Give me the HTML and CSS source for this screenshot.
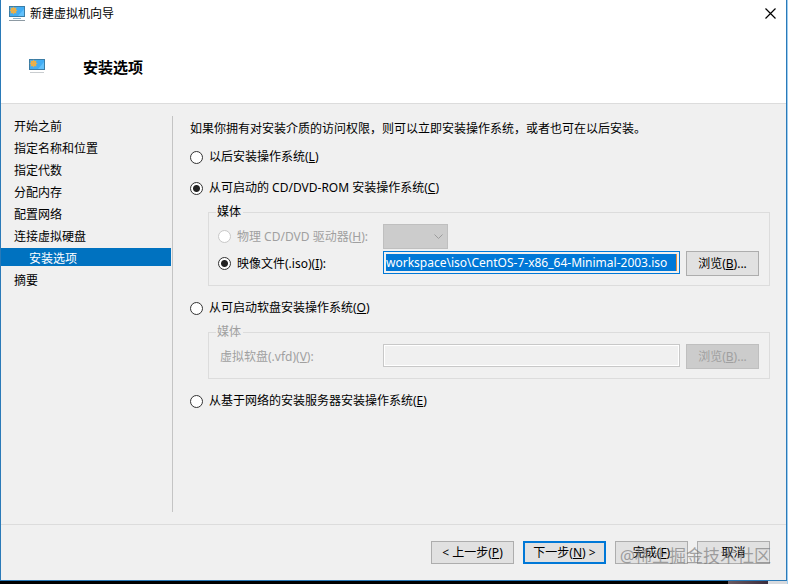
FILE: index.html
```html
<!DOCTYPE html>
<html lang="zh-CN">
<head>
  <meta charset="utf-8">
  <title>新建虚拟机向导</title>
  <link rel="stylesheet" href="styles.css">
</head>
<body>
  <div class="dialog">
    <!-- Title bar -->
    <header class="titlebar">
      <svg class="app-icon" viewBox="0 0 16 16">
        <rect x="0" y="0" width="16" height="11" fill="#3b7da6"/>
        <rect x="1" y="1" width="14" height="9" fill="#42adf4"/>
        <path d="M9 10L15 3V10Z" fill="#63c1fb"/>
        <path d="M4.500 0.500L5.500 2L7.500 1.500L7 3.500L8.500 4.500L7 5.500L7.500 7.500L5.500 7L4.500 8.500L3.500 7L1.500 7.500L2 5.500L0.500 4.500L2 3.500L1.500 1.500L3.500 2Z" fill="#e9b04a"/>
        <rect x="4" y="12" width="8" height="1" fill="#8ab4cc"/>
        <rect x="0" y="14" width="16" height="1" fill="#8d9aa3"/>
      </svg>
      <span class="title">新建虚拟机向导</span>
      <button class="close" aria-label="关闭">
        <svg viewBox="0 0 11 11"><path d="M0.500 0.500L10.500 10.500M10.500 0.500L0.500 10.500" stroke="#000" stroke-width="1.200"/></svg>
      </button>
    </header>

    <!-- Page heading -->
    <div class="heading">
      <svg class="page-icon" viewBox="0 0 16 16">
        <rect x="0" y="0" width="16" height="11" fill="#3b7da6"/>
        <rect x="1" y="1" width="14" height="9" fill="#42adf4"/>
        <path d="M9 10L15 3V10Z" fill="#63c1fb"/>
        <path d="M4.500 0.500L5.500 2L7.500 1.500L7 3.500L8.500 4.500L7 5.500L7.500 7.500L5.500 7L4.500 8.500L3.500 7L1.500 7.500L2 5.500L0.500 4.500L2 3.500L1.500 1.500L3.500 2Z" fill="#e9b04a"/>
        <rect x="1" y="13" width="14" height="1" fill="#c9cdd0"/>
      </svg>
      <h1>安装选项</h1>
    </div>

    <div class="body">
      <nav class="steps">
        <a href="#">开始之前</a>
        <a href="#">指定名称和位置</a>
        <a href="#">指定代数</a>
        <a href="#">分配内存</a>
        <a href="#">配置网络</a>
        <a href="#">连接虚拟硬盘</a>
        <a href="#" class="current">安装选项</a>
        <a href="#">摘要</a>
      </nav>

      <form class="options" id="installForm">
        <p>如果你拥有对安装介质的访问权限，则可以立即安装操作系统，或者也可在以后安装。</p>

        <label class="option"><input type="radio" name="install"><span>以后安装操作系统(<u>L</u>)</span></label>

        <label class="option"><input type="radio" name="install" checked><span>从可启动的 CD/DVD-ROM 安装操作系统(<u>C</u>)</span></label>
        <fieldset>
          <legend>媒体</legend>
          <div class="media">
            <label class="option disabled"><input type="radio" name="media" disabled><span>物理 CD/DVD 驱动器(<u>H</u>):</span></label>
            <div class="drive">
              <select aria-label="物理驱动器" disabled></select>
              <svg viewBox="0 0 9 5"><path d="M0.500 0.500L4.500 4.500L8.500 0.500" fill="none" stroke="#9c9c9c"/></svg>
            </div>
            <label class="option"><input type="radio" name="media" checked><span>映像文件(.iso)(<u>I</u>):</span></label>
            <input type="text" class="path selected" aria-label="映像文件" value="workspace\iso\CentOS-7-x86_64-Minimal-2003.iso">
            <button type="button">浏览(<u>B</u>)...</button>
          </div>
        </fieldset>

        <label class="option"><input type="radio" name="install"><span>从可启动软盘安装操作系统(<u>O</u>)</span></label>
        <fieldset disabled>
          <legend>媒体</legend>
          <div class="media">
            <label class="floppy" for="floppy">虚拟软盘(.vfd)(<u>V</u>):</label>
            <input type="text" class="path" id="floppy">
            <button type="button">浏览(<u>B</u>)...</button>
          </div>
        </fieldset>

        <label class="option"><input type="radio" name="install"><span>从基于网络的安装服务器安装操作系统(<u>E</u>)</span></label>
      </form>
    </div>

    <footer>
      <button class="wide">&lt; 上一步(<u>P</u>)</button>
      <button class="wide default">下一步(<u>N</u>) &gt;</button>
      <button>完成(<u>F</u>)</button>
      <button>取消</button>
      <span class="watermark">@稀土掘金技术社区</span>
    </footer>
  </div>
  <div class="desktop"></div>
</body>
</html>
```
FILE: styles.css
```css
* {
  box-sizing: border-box;
}

body {
  margin: 0;
  padding-right: 1px;
  min-height: 100vh;
  display: flex;
  flex-direction: column;
  background: #9fcdf0;
  color: #000;
  font: 12px/18px "Noto Sans", "Noto Sans CJK SC", sans-serif;
}

button, input, select {
  font: inherit;
  color: inherit;
}

.dialog {
  flex: 1;
  display: flex;
  flex-direction: column;
  background: #f0f0f0;
  border: 1px solid #2a7ab8;
  border-top: 0;
}

.desktop {
  height: 3px;
  background: linear-gradient(to right, #000 728px, #6b5a60 728px, #3a2c3c 768px, #d8dade 768px);
}

/* Title bar and heading */
.titlebar {
  display: flex;
  align-items: center;
  height: 27px;
  padding: 0 10px 0 8px;
  background: #fff;
}

.app-icon {
  width: 16px;
  height: 16px;
}

.title {
  flex: 1;
  margin-left: 5px;
}

.close {
  width: 11px;
  height: 11px;
  padding: 0;
  border: 0;
  background: none;
}

.close svg {
  display: block;
}

.heading {
  display: flex;
  align-items: center;
  height: 77px;
  padding: 4px 28px 0;
  background: #fff;
  border-bottom: 1px solid #dcdcdc;
}

.page-icon {
  width: 16px;
  height: 16px;
}

h1 {
  margin: 0 0 0 38px;
  font-size: 15px;
  line-height: 20px;
  font-weight: bold;
}

/* Step list and options */
.body {
  flex: 1;
  display: flex;
  padding: 12px 16px 12px 0;
}

.steps {
  display: flex;
  flex-direction: column;
  gap: 4px;
  width: 172px;
  padding-right: 1px;
  border-right: 1px solid #c4c4c4;
}

.steps a {
  height: 18px;
  padding-left: 13px;
  color: #000;
  line-height: 21px;
  text-decoration: none;
}

.steps .current {
  padding-left: 28px;
  background: #0072c0;
  color: #fff;
}

.options {
  flex: 1;
  padding: 4px 0 0 17px;
}

.options p {
  margin: 0 0 10px;
}

.option {
  display: flex;
  align-items: center;
  gap: 6px;
}

.option + .option,
fieldset + .option {
  margin-top: 13px;
}

input[type="radio"] {
  appearance: none;
  width: 13px;
  height: 13px;
  margin: 0;
  border: 1px solid #333;
  border-radius: 50%;
  background: #fff;
}

input[type="radio"]:checked {
  background: radial-gradient(circle, #222 3px, #fff 4px);
}

input[type="radio"]:disabled {
  border-color: #c8c8c8;
}

fieldset {
  min-width: 0;
  margin: 6px 0 0 18px;
  padding: 3px 10px 9px 9px;
  border: 1px solid #dcdcdc;
}

legend {
  margin-left: -2px;
  padding: 0 2px 0 1px;
}

.disabled,
fieldset:disabled {
  color: #a0a0a0;
}

.media {
  display: grid;
  grid-template-columns: 159px 1fr 73px;
  column-gap: 6px;
  row-gap: 2px;
}

.media .option {
  margin: 0;
}

.floppy {
  padding-left: 2px;
  line-height: 25px;
}

.drive {
  grid-column: 2 / 4;
  position: relative;
  width: 65px;
  height: 25px;
}

.drive select {
  appearance: none;
  display: block;
  width: 100%;
  height: 100%;
  border: 1px solid #bfbfbf;
  border-radius: 0;
  background: #ccc;
  opacity: 1;
}

.drive svg {
  position: absolute;
  top: 10px;
  right: 5px;
  width: 9px;
  height: 5px;
}

.path {
  width: 100%;
  min-width: 0;
  height: 23px;
  padding: 1px;
  border: 1px solid #c8c8c8;
  background: #f0f0f0;
  box-shadow: inset 0 0 0 1px #fff;
}

.selected {
  padding: 2px;
  border-color: #0078d7;
  background: #fff linear-gradient(to left, #e08a3c 1px, #0078d7 1px) content-box no-repeat;
  box-shadow: none;
  color: #fff;
}

button {
  height: 25px;
  padding: 0;
  border: 1px solid #adadad;
  background: #e1e1e1;
  white-space: nowrap;
}

button:disabled {
  border-color: #bfbfbf;
  background: #ccc;
  color: #a0a0a0;
}

/* Wizard buttons */
footer {
  position: relative;
  display: flex;
  justify-content: flex-end;
  gap: 9px;
  padding: 16px;
  border-top: 1px solid #dcdcdc;
}

footer button {
  width: 73px;
  height: 23px;
}

footer .wide {
  width: 83px;
}

footer .default {
  border: 2px solid #0078d7;
}

.watermark {
  position: absolute;
  right: 15px;
  bottom: 12px;
  color: rgba(110, 110, 110, 0.6);
  font-size: 17px;
  line-height: 24px;
  pointer-events: none;
}
```
